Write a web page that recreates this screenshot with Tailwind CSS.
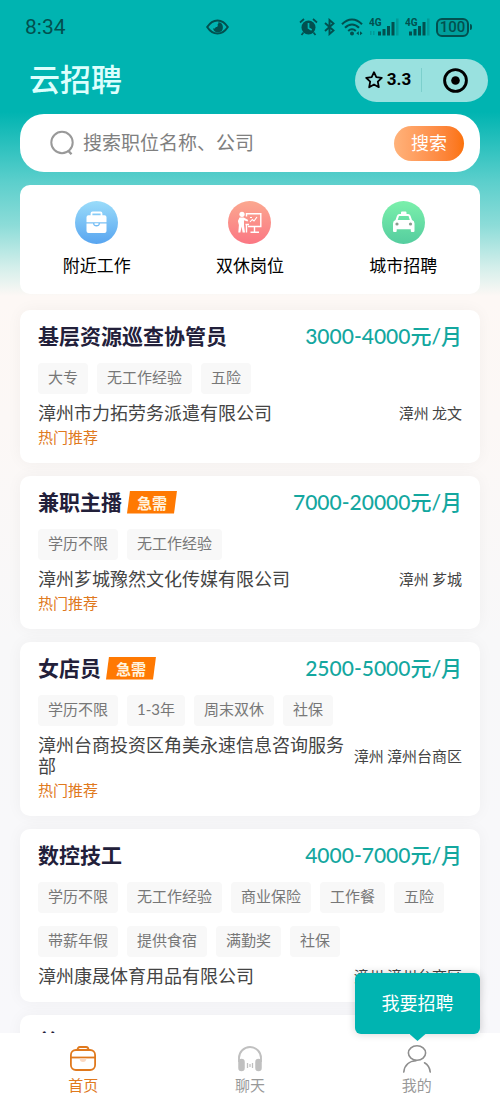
<!DOCTYPE html>
<html lang="zh-CN">
<head>
<meta charset="utf-8">
<meta name="viewport" content="width=device-width, initial-scale=1">
<title>云招聘</title>
<script src="https://cdn.jsdelivr.net/npm/@tailwindcss/browser@4"></script>
</head>
<body class="font-['Noto_Sans_CJK_SC',sans-serif]">
<div class="flex h-dvh flex-col overflow-hidden bg-[#f9f8f9]">
  <div class="flex min-h-0 flex-1 flex-col overflow-y-auto bg-[linear-gradient(to_bottom,#00b4b1_0px,#00b4b1_112px,#5ccfcc_182px,#8cdcd8_225px,#d5efeb_268px,#fdf8f5_296px,#fcf8f6_420px,#f8f8f9_640px,#f8f8fb_1030px)] [scrollbar-width:none]">

    <!-- status bar -->
    <div class="flex h-[54px] shrink-0 items-center pr-7 pl-[25px] text-[#02504f]">
      <span class="font-[Roboto,sans-serif] text-[21px] leading-6">8:34</span>
      <svg class="mr-[70px] ml-auto h-4 w-[23px]" viewBox="0 0 23 16" fill="none" aria-hidden="true">
        <path d="M1.2 8C4 3.600 7.500 1.400 11.500 1.400S19 3.600 21.800 8C19 12.400 15.500 14.600 11.500 14.600S4 12.400 1.200 8Z" stroke="currentColor" stroke-width="2"/>
        <path d="M12 3.300a5 5 0 1 1-5 6c1.500.6 2.700 0 2.600-1.300 1.800.2 2.800-1.300 1.900-2.600 1-.3 1.200-1.300.5-2.100Z" fill="currentColor"/>
      </svg>
      <div class="flex items-center gap-[6px]">
        <svg class="h-[18px] w-[19px]" viewBox="0 0 19 18" aria-hidden="true">
          <circle cx="9.500" cy="9.500" r="7" fill="currentColor"/>
          <path d="M1 4.500 5 1M18 4.500 14 1M4.500 14.500 2.500 17M14.500 14.500l2 2.500" stroke="currentColor" stroke-width="1.700" fill="none"/>
          <path d="M9.500 5v5l3.200 2" stroke="#00b4b1" stroke-width="1.700" fill="none"/>
        </svg>
        <svg class="h-[18px] w-[11px]" viewBox="0 0 11 18" fill="none" stroke="currentColor" stroke-width="1.900" aria-hidden="true">
          <path d="M1 5l8.500 7.500L5.500 16V2l4 3.500L1 13"/>
        </svg>
        <svg class="h-[18px] w-[22px]" viewBox="0 0 22 18" fill="none" stroke="currentColor" stroke-width="2" aria-hidden="true">
          <path d="M1 6.300C7-.2 15-.2 21 6.300M4 9.800c4.300-4.500 9.700-4.500 14 0M7.200 13c2.300-2.300 5.300-2.300 7.600 0"/>
          <circle cx="11" cy="15.500" r="2" fill="currentColor" stroke="none"/>
          <path d="M17.800 13.300v4l-2.500-2zM19 13.300v4l2.500-2z" fill="currentColor" stroke="none"/>
        </svg>
        <svg class="h-[18px] w-[30px]" viewBox="0 0 30 18" fill="currentColor" role="img" aria-label="4G">
          <text x="0" y="8" font-family="Roboto" font-size="10" font-weight="700">4G</text>
          <path d="M9 13.500h3v4H9zM13.500 11h3v6.500h-3zM18 8h3v9.500h-3zM22.500 4h3v13.500h-3z"/>
          <path d="M27 .5h2.500v17H27zM1 13h1.500v4H1zM4 13h1.500v4H4z" opacity=".25"/>
        </svg>
        <svg class="h-[18px] w-[25px]" viewBox="0 0 25 18" fill="currentColor" role="img" aria-label="4G">
          <text x="0" y="8" font-family="Roboto" font-size="10" font-weight="700">4G</text>
          <path d="M4 13.500h3v4H4zM8.500 11h3v6.500h-3zM13 8h3v9.500h-3zM17.500 4h3v13.500h-3z"/>
          <path d="M22 .5h2.500v17H22z" opacity=".25"/>
        </svg>
        <span class="flex items-center gap-px">
          <span class="flex h-[19px] w-[33px] items-center justify-center rounded-md border-2 border-[#02504f] bg-[#02504f]/20 font-[Roboto,sans-serif] text-[15px] font-medium">100</span>
          <span class="h-[6px] w-[2px] rounded-r bg-[#02504f]"></span>
        </span>
      </div>
    </div>

    <!-- app title and mini-program capsule -->
    <header class="flex h-[60px] shrink-0 items-center justify-between pr-3 pb-2 pl-[29px]">
      <h1 class="pb-1 text-[31px] leading-10 font-medium text-[#dcfffd]">云招聘</h1>
      <div class="flex h-[43px] w-[133px] items-center rounded-full bg-[#99e1df] text-black">
        <button type="button" class="flex h-full flex-1 items-center justify-center gap-1 font-[Roboto,sans-serif] text-[17px] font-bold">
          <svg class="h-[18px] w-[18px]" viewBox="0 0 18 18" fill="none" stroke="currentColor" stroke-width="1.800" stroke-linejoin="round" aria-hidden="true"><path d="m9 1.200 2.300 5 5.500.7-4 3.800 1 5.500L9 13.500l-4.800 2.700 1-5.500-4-3.800 5.500-.7Z"/></svg>
          3.3
        </button>
        <span class="h-6 w-px bg-[#7ccfcc]"></span>
        <button type="button" class="flex h-full flex-1 items-center justify-center" aria-label="关闭">
          <svg class="h-[25px] w-[25px]" viewBox="0 0 25 25" aria-hidden="true"><circle cx="12.500" cy="12.500" r="10.900" fill="none" stroke="currentColor" stroke-width="2.900"/><circle cx="12.500" cy="12.500" r="4.300" fill="currentColor"/></svg>
        </button>
      </div>
    </header>

    <main class="flex flex-col gap-[13px] px-5 pb-5">
      <form class="flex h-[58px] shrink-0 items-center rounded-[24px] bg-white pr-4 pl-[30px]" onsubmit="return false">
        <svg class="h-[26px] w-6 shrink-0" viewBox="0 0 24 26" fill="none" stroke="#999" stroke-width="2" aria-hidden="true"><circle cx="12" cy="12.500" r="10.700"/><path d="m18.500 21 3 3.300" stroke-width="2.400"/></svg>
        <input type="text" aria-label="搜索职位" placeholder="搜索职位名称、公司" class="ml-[9px] h-10 min-w-0 flex-1 pb-1 text-[19px] outline-none placeholder:text-[#808080]">
        <button type="submit" class="h-[35px] w-[70px] rounded-full bg-linear-to-r from-[#ffb27a] to-[#fb7208] pb-[2px] text-[18px] leading-[33px] text-white">搜索</button>
      </form>

      <nav class="grid h-[109px] shrink-0 grid-cols-3 rounded-[10px] bg-white pt-4 text-[17px] text-black" aria-label="分类">
        <a href="#nearby" class="flex flex-col items-center gap-[9px]">
          <svg class="h-[43px] w-[43px]" viewBox="0 0 43 43" aria-hidden="true">
            <defs><linearGradient id="blue" x2="0" y2="1"><stop stop-color="#9adcfa"/><stop offset="1" stop-color="#58a5f0"/></linearGradient></defs>
            <circle cx="21.500" cy="21.500" r="21.500" fill="url(#blue)"/>
            <path d="M16.500 15v-2.500q0-1 1-1h8q1 0 1 1V15" fill="none" stroke="#fff" stroke-width="1.800"/>
            <path d="M13.500 14.200h16q2 0 2 2v5h-20v-5q0-2 2-2ZM11.500 22.500H18q.3 3 3.500 3t3.500-3h6.500V30q0 2-2 2h-16q-2 0-2-2Z" fill="#fff"/>
            <path d="M19.500 22.300h4v1.200q-2 1.200-4 0Z" fill="#fff"/>
          </svg>
          <span class="leading-6">附近工作</span>
        </a>
        <a href="#weekend" class="flex flex-col items-center gap-[9px]">
          <svg class="h-[43px] w-[43px]" viewBox="0 0 43 43" aria-hidden="true">
            <defs><linearGradient id="coral" x2="0" y2="1"><stop stop-color="#fba890"/><stop offset="1" stop-color="#fb7783"/></linearGradient></defs>
            <circle cx="21.500" cy="21.500" r="21.500" fill="url(#coral)"/>
            <circle cx="14" cy="13.300" r="2.600" fill="#fff"/>
            <path d="M11.500 16.500h4.200l4.500 2.500-.7 1.500-3.500-1.300v5l1 7.300h-2.400l-1-6-1.200 6h-2.100l.6-7.500-1-4Z" fill="#fff"/>
            <path d="M18.500 15.500v-2.700h14.300v12.700H20M26.500 25.500v5.500M22.500 31.300h8.500M18.500 24v7.500M17.500 23.500h3.500" fill="none" stroke="#fff" stroke-width="1.400"/>
            <path d="m22 21 2.300-2.500 1.700 1.500 3-4M22 16.500h2" fill="none" stroke="#fff" stroke-width="1.100"/>
          </svg>
          <span class="leading-6">双休岗位</span>
        </a>
        <a href="#city" class="flex flex-col items-center gap-[9px]">
          <svg class="h-[43px] w-[43px]" viewBox="0 0 43 43" aria-hidden="true">
            <defs><linearGradient id="green" x2="0" y2="1"><stop stop-color="#7bf0ab"/><stop offset="1" stop-color="#55cd9f"/></linearGradient></defs>
            <circle cx="21.500" cy="21.500" r="21.500" fill="url(#green)"/>
            <path fill-rule="evenodd" d="M19 13v-1.500q0-1 1-1h3.500q1 0 1 1V13h1.700q1.700 0 2.300 1.700l1.500 4.300q2.500.8 2.500 3.500V30q0 1-1 1h-1.700q-1 0-1-1v-1.800H14.700V30q0 1-1 1H12q-1 0-1-1v-7.500q0-2.700 2.500-3.500l1.500-4.300Q15.600 13 17.300 13Zm-2 2-1.300 4h12.100l-1.300-4Z" fill="#fff"/>
            <circle cx="15" cy="23" r="1.600" fill="#8b9d8e"/><circle cx="28.500" cy="23" r="1.600" fill="#8b9d8e"/>
          </svg>
          <span class="leading-6">城市招聘</span>
        </a>
      </nav>

      <section class="mt-[3px] flex flex-col gap-[13px]" aria-label="职位列表">
        <article class="rounded-[10px] bg-white px-[18px] pt-[10px] pb-4 shadow-[0_0_16px_rgba(0,0,0,0.045)]">
          <div class="flex h-8 items-center justify-between">
            <h2 class="text-[21px] font-bold text-[#22203a]">基层资源巡查协管员</h2>
            <span class="font-[Lato,'Noto_Sans_CJK_SC',sans-serif] text-[21px] font-medium text-[#14a79f]">3000-4000元/月</span>
          </div>
          <ul class="mt-[11px] flex flex-wrap gap-x-[9px] gap-y-[13px] font-[Lato,'Noto_Sans_CJK_SC',sans-serif] text-[15px] leading-[29px] text-[#777]">
            <li class="rounded bg-[#f8f8f8] px-[10px] pb-[2px]">大专</li>
            <li class="rounded bg-[#f8f8f8] px-[10px] pb-[2px]">无工作经验</li>
            <li class="rounded bg-[#f8f8f8] px-[10px] pb-[2px]">五险</li>
          </ul>
          <div class="mt-2 flex items-center gap-2 text-[#444]">
            <p class="flex-1 text-[18px] leading-[21px]">漳州市力拓劳务派遣有限公司</p>
            <p class="shrink-0 text-[15px] leading-[21px]">漳州 龙文</p>
          </div>
          <p class="mt-1 text-[15px] leading-5 text-[#e0791d]">热门推荐</p>
        </article>

        <article class="rounded-[10px] bg-white px-[18px] pt-[10px] pb-4 shadow-[0_0_16px_rgba(0,0,0,0.045)]">
          <div class="flex h-8 items-center justify-between">
            <div class="flex items-center gap-[5px]">
              <h2 class="text-[21px] font-bold text-[#22203a]">兼职主播</h2>
              <span class="bg-[#ff7902] px-[10px] text-[15px] leading-[23px] font-bold text-[#fff3df] [clip-path:polygon(3px_0,100%_0,calc(100%-3px)_100%,0_100%)]">急需</span>
            </div>
            <span class="font-[Lato,'Noto_Sans_CJK_SC',sans-serif] text-[21px] font-medium text-[#14a79f]">7000-20000元/月</span>
          </div>
          <ul class="mt-[11px] flex flex-wrap gap-x-[9px] gap-y-[13px] font-[Lato,'Noto_Sans_CJK_SC',sans-serif] text-[15px] leading-[29px] text-[#777]">
            <li class="rounded bg-[#f8f8f8] px-[10px] pb-[2px]">学历不限</li>
            <li class="rounded bg-[#f8f8f8] px-[10px] pb-[2px]">无工作经验</li>
          </ul>
          <div class="mt-2 flex items-center gap-2 text-[#444]">
            <p class="flex-1 text-[18px] leading-[21px]">漳州芗城豫然文化传媒有限公司</p>
            <p class="shrink-0 text-[15px] leading-[21px]">漳州 芗城</p>
          </div>
          <p class="mt-1 text-[15px] leading-5 text-[#e0791d]">热门推荐</p>
        </article>

        <article class="rounded-[10px] bg-white px-[18px] pt-[10px] pb-4 shadow-[0_0_16px_rgba(0,0,0,0.045)]">
          <div class="flex h-8 items-center justify-between">
            <div class="flex items-center gap-[5px]">
              <h2 class="text-[21px] font-bold text-[#22203a]">女店员</h2>
              <span class="bg-[#ff7902] px-[10px] text-[15px] leading-[23px] font-bold text-[#fff3df] [clip-path:polygon(3px_0,100%_0,calc(100%-3px)_100%,0_100%)]">急需</span>
            </div>
            <span class="font-[Lato,'Noto_Sans_CJK_SC',sans-serif] text-[21px] font-medium text-[#14a79f]">2500-5000元/月</span>
          </div>
          <ul class="mt-[11px] flex flex-wrap gap-x-[9px] gap-y-[13px] font-[Lato,'Noto_Sans_CJK_SC',sans-serif] text-[15px] leading-[29px] text-[#777]">
            <li class="rounded bg-[#f8f8f8] px-[10px] pb-[2px]">学历不限</li>
            <li class="rounded bg-[#f8f8f8] px-[10px] pb-[2px]">1-3年</li>
            <li class="rounded bg-[#f8f8f8] px-[10px] pb-[2px]">周末双休</li>
            <li class="rounded bg-[#f8f8f8] px-[10px] pb-[2px]">社保</li>
          </ul>
          <div class="mt-2 flex items-center gap-1 text-[#444]">
            <p class="flex-1 text-[18px] leading-[21px]">漳州台商投资区角美永速信息咨询服务部</p>
            <p class="shrink-0 text-[15px] leading-[21px]">漳州 漳州台商区</p>
          </div>
          <p class="mt-1 text-[15px] leading-5 text-[#e0791d]">热门推荐</p>
        </article>

        <article class="rounded-[10px] bg-white px-[18px] pt-[10px] pb-4 shadow-[0_0_16px_rgba(0,0,0,0.045)]">
          <div class="flex h-8 items-center justify-between">
            <h2 class="text-[21px] font-bold text-[#22203a]">数控技工</h2>
            <span class="font-[Lato,'Noto_Sans_CJK_SC',sans-serif] text-[21px] font-medium text-[#14a79f]">4000-7000元/月</span>
          </div>
          <ul class="mt-[11px] flex flex-wrap gap-x-[9px] gap-y-[13px] font-[Lato,'Noto_Sans_CJK_SC',sans-serif] text-[15px] leading-[29px] text-[#777]">
            <li class="rounded bg-[#f8f8f8] px-[10px] pb-[2px]">学历不限</li>
            <li class="rounded bg-[#f8f8f8] px-[10px] pb-[2px]">无工作经验</li>
            <li class="rounded bg-[#f8f8f8] px-[10px] pb-[2px]">商业保险</li>
            <li class="rounded bg-[#f8f8f8] px-[10px] pb-[2px]">工作餐</li>
            <li class="rounded bg-[#f8f8f8] px-[10px] pb-[2px]">五险</li>
            <li class="rounded bg-[#f8f8f8] px-[10px] pb-[2px]">带薪年假</li>
            <li class="rounded bg-[#f8f8f8] px-[10px] pb-[2px]">提供食宿</li>
            <li class="rounded bg-[#f8f8f8] px-[10px] pb-[2px]">满勤奖</li>
            <li class="rounded bg-[#f8f8f8] px-[10px] pb-[2px]">社保</li>
          </ul>
          <div class="mt-2 flex items-center gap-1 text-[#444]">
            <p class="flex-1 text-[18px] leading-[21px]">漳州康晟体育用品有限公司</p>
            <p class="shrink-0 text-[15px] leading-[21px]">漳州 漳州台商区</p>
          </div>
        </article>

        <article class="rounded-[10px] bg-white px-[18px] pt-[10px] pb-4 shadow-[0_0_16px_rgba(0,0,0,0.045)]">
          <div class="flex h-8 items-center justify-between">
            <h2 class="text-[21px] font-bold text-[#22203a]">普工</h2>
          </div>
        </article>
      </section>
    </main>
  </div>

  <!-- tab bar -->
  <nav class="relative grid h-[73px] shrink-0 grid-cols-3 bg-white pt-3 text-[15px] leading-5 text-[#999]" aria-label="主导航">
    <a href="#home" class="flex flex-col items-center gap-[2px] text-[#e0791d]" aria-current="page">
      <svg class="h-7 w-7" viewBox="0 0 28 28" fill="none" stroke="currentColor" stroke-width="1.800" aria-hidden="true">
        <path d="M8.500 5q0-3 2.500-3h6q2.500 0 2.500 3" />
        <rect x="1.900" y="5" width="24.200" height="20" rx="5"/>
        <path d="M2 12.500h24"/><path d="M10.500 13.500h7q-.5 3.500-3.500 3.500t-3.500-3.500Z" fill="#fbd9c2" stroke="none"/>
      </svg>
      首页
    </a>
    <a href="#chat" class="flex flex-col items-center gap-[2px]">
      <svg class="h-7 w-7" viewBox="0 0 28 28" fill="none" stroke="#c0c0c0" aria-hidden="true">
        <path d="M3 17v-4a11 11 0 0 1 22 0v4" stroke-width="1.900"/>
        <path d="M5.500 17v6M22.500 17v6" stroke-width="6.500" stroke-linecap="round"/>
        <path d="M11.500 18v5M14 19v3M16.500 18v5" stroke-width="1.300"/>
      </svg>
      聊天
    </a>
    <a href="#me" class="flex flex-col items-center gap-[2px]">
      <svg class="h-7 w-7" viewBox="0 0 28 28" fill="none" stroke="#8e8e8e" stroke-width="1.600" stroke-linecap="round" aria-hidden="true">
        <ellipse cx="14" cy="8" rx="8.600" ry="7.200"/>
        <path d="M.8 27C1.500 20 6.500 16 13 15.700M21.500 17.800c3.300 2 5.300 5 5.700 9.200"/>
      </svg>
      我的
    </a>
    <button type="button" class="absolute right-5 bottom-[72px] h-[61px] w-[125px] rounded-md bg-[#00b4b1] pb-1 text-[18px] text-white shadow-[0_0_8px_rgba(0,0,0,0.18)] after:absolute after:top-full after:left-1/2 after:h-[7px] after:w-4 after:-translate-x-1/2 after:bg-[#00b4b1] after:[clip-path:polygon(0_0,100%_0,50%_100%)]">我要招聘</button>
  </nav>
</div>
</body>
</html>
